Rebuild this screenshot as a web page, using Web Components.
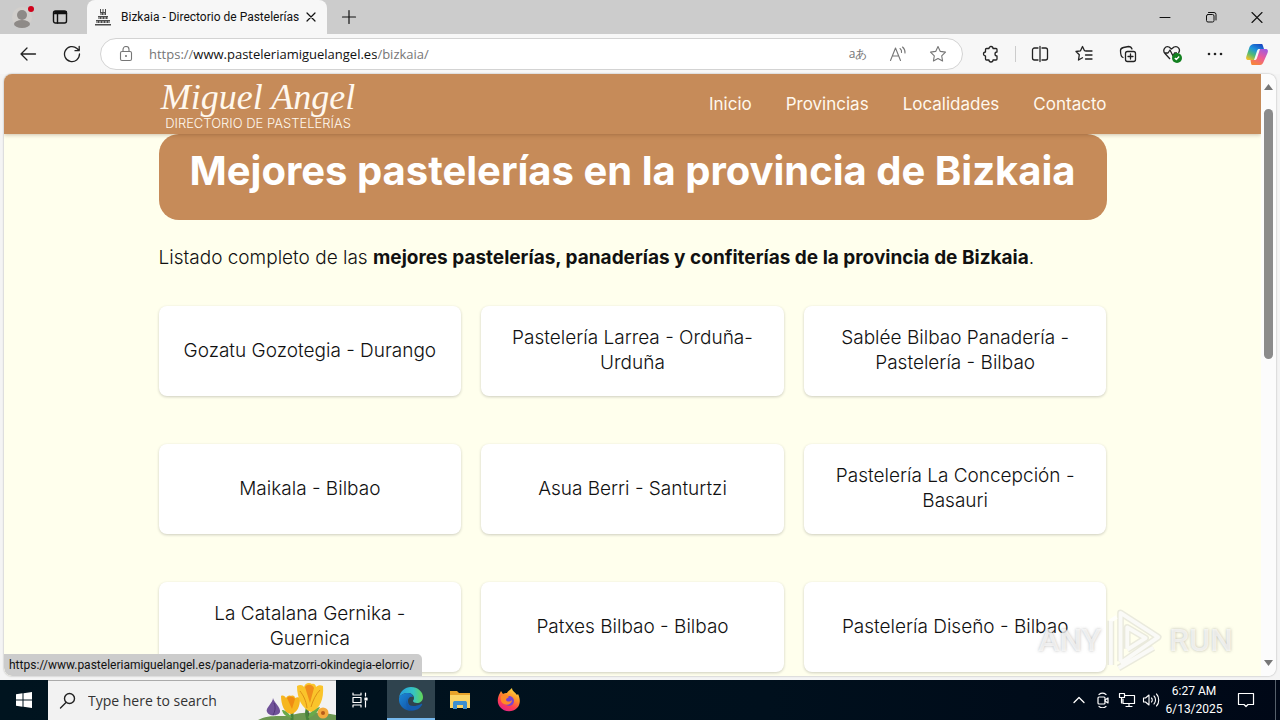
<!DOCTYPE html>
<html lang="es">
<head>
<meta charset="utf-8">
<title>Bizkaia - Directorio de Pastelerías</title>
<style>
  html, body { height: 100%; margin: 0; }
  body { overflow: hidden; font-family: "Open Sans", "Noto Sans", sans-serif; color: #111; }
</style>
</head>
<body>
<desktop-screen></desktop-screen>
<script>
const define = (name, css, html) => {
  const t = document.createElement('template');
  t.innerHTML = `<style>*{box-sizing:border-box}button{font:inherit;color:inherit;background:none;border:0;padding:0;margin:0;display:flex;align-items:center;justify-content:center}a{color:inherit;text-decoration:none}svg{display:block;flex:none}${css}</style>${html}`;
  customElements.define(name, class extends HTMLElement {
    constructor() {
      super();
      this.attachShadow({ mode: 'open' }).append(t.content.cloneNode(true));
    }
  });
};

/* Line icon: <svg> wrapper with a shared stroke style */
const icon = (size, body, w = 1) =>
  `<svg width="${size}" height="${size}" viewBox="0 0 ${size} ${size}" fill="none" stroke="currentColor" stroke-width="${w}" stroke-linecap="round" stroke-linejoin="round" aria-hidden="true">${body}</svg>`;

define('tab-strip', `
  :host{display:flex;height:34px;background:#ccc;align-items:stretch;flex:none;color:#111}
  .left{display:flex;width:87px;align-items:center;padding-left:12px;gap:18px;background:#cbcbcb;border-radius:0 0 8px 0}
  .tab{display:flex;align-items:center;width:240px;background:#f7f7f7;border-radius:8px 8px 0 0;padding:0 8px;font:12px/16px Roboto,sans-serif}
  .tab span{flex:1;white-space:nowrap;margin-left:10px}
  .new{width:44px}
  .win{margin-left:auto;display:flex}
  .win button{width:46px}
`, `
  <div class="left">
    <button aria-label="Profile"><svg width="22" height="24" viewBox="0 0 22 24"><circle cx="10" cy="12" r="10" fill="#d2cfcc"/><circle cx="10" cy="10" r="5" fill="#8e8a87"/><ellipse cx="10" cy="19" rx="8" ry="4" fill="#8e8a87"/><circle cx="19" cy="4" r="3" fill="#d0021b"/></svg></button>
    <button aria-label="Tab actions">${icon(16, '<rect x="1.500" y="2" width="13" height="12" rx="2"/><path d="M2 4.500H14.500M5.500 5V14"/><path d="M3 3H14" stroke-width="2"/>', 1.4)}</button>
  </div>
  <div class="tab">
    <svg width="16" height="17" viewBox="0 0 16 17" fill="#4c4c4c"><path d="M5 3h6v3H5zM3 7h10v3H3zM1 11h14v3H1zM0 15h16v1.500H0z"/><path d="M5 0h1v3H5zM10 0h1v3h-1zM7.500 0h1v3h-1z"/><path d="M5 5h6M3 9h10M1 13h14" stroke="#ddd" stroke-dasharray="2 1"/></svg>
    <span>Bizkaia - Directorio de Pastelerías</span>
    <button aria-label="Close tab">${icon(16, '<path d="M4 4l8 8M12 4l-8 8"/>', 1.2)}</button>
  </div>
  <button class="new" aria-label="New tab">${icon(16, '<path d="M8 1.500v13M1.500 8h13"/>', 1.2)}</button>
  <div class="win">
    <button aria-label="Minimize">${icon(12, '<path d="M1 6.500h10"/>')}</button>
    <button aria-label="Restore">${icon(12, '<rect x="1.500" y="3.500" width="7.500" height="7.500" rx="1.500"/><path d="M3.500 1.500h5.500a2 2 0 0 1 2 2V9"/>')}</button>
    <button aria-label="Close">${icon(12, '<path d="M1 1.500l10 10M11 1.500l-10 10"/>', 1.1)}</button>
  </div>
`);

define('tool-bar', `
  :host{display:flex;height:40px;flex:none;background:#f7f7f7;align-items:center;padding:0 2px 0 6px;color:#222}
  .nav{width:44px;height:32px}
  .url{flex:1;height:32px;margin-left:6px;border:1px solid #d3d3d3;border-radius:16px;background:#fff;display:flex;align-items:center;padding-left:17px;padding-right:4px;font-size:13px;color:#767676}
  .url label{display:flex;flex:1;margin-left:15px;align-items:center;line-height:20px;font-size:13px}
  .url input{border:0;padding:0;margin:0;outline:0;background:none;font:inherit;color:#111;field-sizing:content;height:20px}
  .url button{width:40px}
  .url .lang{font-size:12px}
  .right{display:flex;align-items:center;margin-left:6px}
  .right button{width:44px;height:32px}
  hr{width:1px;height:16px;border:0;background:#ccc;margin:0 2px}
  .right .more{width:42px}
  .right .pilot{width:42px}
`, `
  <button class="nav" aria-label="Back">${icon(18, '<path d="M16.500 9H2M8 3L2 9l6 6"/>', 1.3)}</button>
  <button class="nav" aria-label="Refresh">${icon(18, '<path d="M16.500 9a7.500 7.500 0 1 1-2.500-5.500L16 5.500M16.200 1.500v4.200h-4.200"/>', 1.3)}</button>
  <div class="url">
    ${icon(16, '<rect x="2.500" y="5.500" width="11" height="9" rx="1.500"/><path d="M5 5.500V3.500a3 3 0 0 1 6 0v2"/><circle cx="8" cy="10" r=".5"/>', 1.1)}
    <label><span>https://</span><input aria-label="Address" value="www.pasteleriamiguelangel.es"><span>/bizkaia/</span></label>
    <button class="lang" aria-label="Translate">aあ</button>
    <button aria-label="Read aloud">${icon(18, '<path d="M1.500 15.500L6.500 3l5 12.500M3.200 11h6.600M11 3.500a4 4 0 0 1 1.500 4M13.500 2a7 7 0 0 1 2.500 6"/>', 1.1)}</button>
    <button aria-label="Favorite">${icon(18, '<path d="M9 1.500l2.300 4.900 5.200.7-3.800 3.700.9 5.200L9 13.500 4.400 16l.9-5.200L1.500 7.100l5.200-.7z"/>', 1.1)}</button>
  </div>
  <div class="right">
    <button aria-label="Extensions">${icon(18, '<path d="M4.500 3.500H7a2 2 0 0 1 4 0h3a1 1 0 0 1 1 1V7a2 2 0 0 0 0 4v3a1 1 0 0 1-1 1h-3a2 2 0 0 1-4 0H4.500a1 1 0 0 1-1-1v-3a2 2 0 0 1 0-4V4.500a1 1 0 0 1 1-1z"/>', 1.3)}</button>
    <hr>
    <button aria-label="Split screen">${icon(18, '<path d="M7 3H3.500a2 2 0 0 0-2 2v8a2 2 0 0 0 2 2H7M11 3h3.500a2 2 0 0 1 2 2v8a2 2 0 0 1-2 2H11M9 1.500v15"/>', 1.3)}</button>
    <button aria-label="Favorites">${icon(18, '<path d="M11 6L9.500 5.700 7.500 1.500 5.500 5.800 1 6.500l3.300 3.200L3.500 15l4-2.300M11.500 6H17M10.500 10H17M10.500 14H17"/>', 1.3)}</button>
    <button aria-label="Collections">${icon(18, '<rect x="6.500" y="6.500" width="10" height="10" rx="2"/><path d="M11.500 9v5M9 11.500h5M4 12.500C2.500 12 1.500 9 1.500 5.500c0-2 1-2.500 3-3l5-1c2 0 3 1 3.500 2.500"/>', 1.3)}</button>
    <button aria-label="Browser essentials"><svg width="20" height="20" viewBox="0 0 20 20" fill="none" stroke="#222" stroke-width="1.300" stroke-linejoin="round"><path d="M8 15L3 9.500C0 6 3.500 1.500 7 3l2.500 2L12 3c4-1.500 7 2.500 4.500 6M3 9h3l2-3 3 6 1.500-3H15"/><circle cx="15" cy="14" r="5" fill="#138020" stroke="none"/><path d="M12.800 14l1.500 1.500 2.900-3" stroke="#fff"/></svg></button>
    <button class="more" aria-label="Settings and more"><svg width="16" height="4" viewBox="0 0 16 4" fill="#222"><circle cx="2" cy="2" r="1.300"/><circle cx="8" cy="2" r="1.300"/><circle cx="14" cy="2" r="1.300"/></svg></button>
    <button class="pilot" aria-label="Copilot"><svg width="22" height="21" viewBox="0 0 22 21"><defs><linearGradient id="a" x1=".8" x2=".2" y2="1"><stop stop-color="#1748c4"/><stop offset=".4" stop-color="#1d95dc"/><stop offset=".7" stop-color="#54bb72"/><stop offset="1" stop-color="#eec02b"/></linearGradient><linearGradient id="b" x1=".8" x2=".3" y2="1"><stop stop-color="#a05be0"/><stop offset=".5" stop-color="#ed5b98"/><stop offset="1" stop-color="#f7853a"/></linearGradient></defs><path d="M16 0H8C6 0 4 1.500 3.500 3L.5 12c-1 3 0 4 2 4h5.500l3-9c.5-1.500 1-2 2.500-2h4.500L17 2c-.3-1-.5-2-1-2z" fill="url(#a)"/><path d="M6 21h8c2 0 3-1.500 3.500-3L21.500 9c1-3 0-4-2-4h-5.500l-3 9c-.5 1.500-1 2-2.500 2H4.500l.5 3c.2 1 .5 2 1 2z" fill="url(#b)"/></svg></button>
  </div>
`);

define('site-header', `
  :host{display:block;background:#c68b59;color:#fff8ee;box-shadow:0 1px 4px rgba(90,50,20,.3);position:relative;font-family:Inter,sans-serif}
  header{max-width:948px;height:60px;margin:0 auto;display:flex;align-items:center;justify-content:space-between}
  .logo{display:flex;flex-direction:column;align-items:center;width:199px}
  .name{font:italic 36px/38px "Liberation Serif",serif;white-space:nowrap}
  .sub{font:300 13px/14px Inter,sans-serif;white-space:nowrap}
  nav{display:flex;gap:34px;font-size:17px;line-height:24px}
`, `
  <header>
    <a class="logo" href="#inicio"><span class="name">Miguel Angel</span><span class="sub">DIRECTORIO DE PASTELERÍAS</span></a>
    <nav><a href="#inicio">Inicio</a><a href="#provincias">Provincias</a><a href="#localidades">Localidades</a><a href="#contacto">Contacto</a></nav>
  </header>
`);

define('shop-card', `
  :host{display:flex}
  a{flex:1;min-height:90px;display:flex;align-items:center;justify-content:center;text-align:center;background:#fff;border-radius:8px;box-shadow:0 1px 3px rgba(0,0,0,.2);padding:0 16px 2px;font:300 19px/25px Inter,sans-serif;color:#111}
`, `<a href="#pasteleria"><span><slot></slot></span></a>`);

define('scroll-bar', `
  :host{display:flex;flex-direction:column;align-items:center;justify-content:space-between;width:15px;flex:none;background:#fcfcfc;padding:10px 0}
  .thumb{width:9px;flex:0 0 43%;border-radius:5px;background:#8b8b8b;margin-top:19px}
  .down{margin-top:auto}
`, `
  <svg width="9" height="6" viewBox="0 0 9 6" fill="#777"><path d="M0 6L4.500 0 9 6z"/></svg>
  <div class="thumb"></div>
  <svg class="down" width="9" height="6" viewBox="0 0 9 6" fill="#777"><path d="M0 0h9L4.500 6z"/></svg>
`);

define('shop-page', `
  :host{display:block;flex:1;min-width:0;overflow:hidden;background:#ffffed;font-family:Inter,sans-serif}
  main{max-width:948px;margin:0 auto}
  h1{margin:0;padding:8px 0 20px;text-align:center;color:#fff;background:#c68b59;border-radius:20px;font-size:40px;line-height:58px;font-weight:700;white-space:nowrap}
  p{margin:24px 0 34px;font-size:19px;line-height:28px;font-weight:300;white-space:nowrap}
  b{font-weight:700}
  .grid{display:grid;grid-template-columns:repeat(3,1fr);gap:48px 20px}
`, `
  <site-header></site-header>
  <main>
    <h1>Mejores pastelerías en la provincia de Bizkaia</h1>
    <p>Listado completo de las <b>mejores pastelerías, panaderías y confiterías de la provincia de Bizkaia</b>.</p>
    <div class="grid">
      <shop-card>Gozatu Gozotegia - Durango</shop-card>
      <shop-card>Pastelería Larrea - Orduña-Urduña</shop-card>
      <shop-card>Sablée Bilbao Panadería - Pastelería - Bilbao</shop-card>
      <shop-card>Maikala - Bilbao</shop-card>
      <shop-card>Asua Berri - Santurtzi</shop-card>
      <shop-card>Pastelería La Concepción - Basauri</shop-card>
      <shop-card>La Catalana Gernika - Guernica</shop-card>
      <shop-card>Patxes Bilbao - Bilbao</shop-card>
      <shop-card>Pastelería Diseño - Bilbao</shop-card>
    </div>
  </main>
`);

define('water-mark', `
  :host{position:absolute;right:43px;bottom:4px;display:flex;align-items:center;gap:6px;font:500 32px/64px Roboto,sans-serif;color:rgba(255,255,255,.7);text-shadow:0 0 3px rgba(120,120,120,.5);pointer-events:none}
`, `
  <span>ANY</span>
  <svg width="56" height="64" viewBox="0 0 58 64" fill="none" stroke-linejoin="round"><g stroke="#bbb" stroke-opacity=".3" stroke-width="7"><path d="M14 54V4L53 29 14 56M4 58V12M21 41V19l19 11-19 12M12 61l36-21"/></g><g stroke="#fff" stroke-opacity=".75" stroke-width="4"><path d="M14 54V4L53 29 14 56M4 58V12l6-4M21 41V19l19 11-19 12M12 61l36-21"/></g></svg>
  <span>RUN</span>
`);

define('browser-view', `
  :host{display:flex;flex:1;min-height:0;background:#f4f4f4;padding:0 4px 4px}
  .frame{position:relative;display:flex;flex:1;min-width:0;overflow:hidden;border-radius:8px;box-shadow:0 0 2px rgba(0,0,0,.35)}
  .status{position:absolute;left:0;bottom:0;height:22px;padding:0 8px 0 5px;background:#ccc;border-radius:0 5px 0 8px;font:12px/22px Roboto,sans-serif;white-space:nowrap;color:#111}
`, `
  <div class="frame">
    <shop-page></shop-page>
    <scroll-bar></scroll-bar>
    <water-mark></water-mark>
    <div class="status">https://www.pasteleriamiguelangel.es/panaderia-matzorri-okindegia-elorrio/</div>
  </div>
`);

define('task-bar', `
  :host{display:flex;height:40px;flex:none;background:linear-gradient(90deg,#00141f,#00101d 60%,#000817);color:#fff;align-items:stretch}
  .start,.view{width:48px}
  .app{width:49px}
  .search{display:flex;align-items:center;width:288px;background:#f2f2f2;border-top:1px solid #aaa;padding-left:11px;overflow:hidden;color:#222}
  .search input{flex:1;min-width:0;border:0;outline:0;background:none;margin:0;padding:0 0 0 11px;font:14px/20px "Open Sans",sans-serif;color:#333}
  .search input::placeholder{color:#333;opacity:1}
  .active{background:#2f434e;border-bottom:2px solid #76b9ed;width:48px;margin-left:3px}
  .tray{margin-left:auto;display:flex;align-items:center}
  .tray button{width:24px;height:40px}
  .tray .clock{width:62px;font:12px/18px Roboto,sans-serif;flex-direction:column}
  .tray .note{width:42px;margin-right:8px}
  .edge{width:5px;height:40px;border-left:1px solid #56606b}
`, `
  <button class="start" aria-label="Start"><svg width="16" height="16" viewBox="0 0 16 16" fill="#fff"><path d="M0 2.200L6.500 1.300V7.500H0zM7.500 1.200L16 0V7.500H7.500zM0 8.500H6.500V14.700L0 13.800zM7.500 8.500H16V16L7.500 14.800z"/></svg></button>
  <label class="search">
    ${icon(18, '<circle cx="10.500" cy="6.500" r="5"/><path d="M7 10.500L1.500 16"/>', 1.4)}
    <input type="search" aria-label="Search" placeholder="Type here to search">
    <svg width="78" height="39" viewBox="0 0 78 39"><path d="M0 39c8-5 20-4 30-4 14-5 34-4 48-1v5z" fill="#6d9852"/><path d="M34 39V24M50 39c-2-6-2-10 1-18" stroke="#46833c" stroke-width="3"/><path d="M50 37c3-7 6-10 12-11-2 5-6 9-12 11zM34 37c-4-6-7-8-10-8 1 5 5 7 10 8z" fill="#69aa4a"/><path d="M15 17c1 5 8 9 7 14-1 4-11 5-13 0-2-4 6-9 6-14z" fill="#705299"/><path d="M16 22c2 4 1 9-1 12" stroke="#4f3477" fill="none"/><path d="M23 15c2-1 4 0 5 2 1-2 3-3 5-2 2-1 4 0 4 2 2-1 4-1 5 0 0 9-3 15-9 16-7-1-10-10-10-18z" fill="#f6b61f"/><path d="M29 17c2-2 6-2 8 1l-3 10z" fill="#ef8c13"/><path d="M39 5c3-2 6-1 7 1 1-4 5-5 8-3 2-1 4 1 4 3 2-2 5-2 7-1 1 13-3 23-12 26-9-3-14-14-14-26z" fill="#fac42b"/><path d="M47 6c2-3 7-3 9 1l-4 15z" fill="#f08d1b"/><path d="M42 10c3 4 6 9 7 17M62 9c-4 4-7 10-9 17" stroke="#dd8f15" fill="none"/><circle cx="65" cy="32" r="5.500" fill="#f4ab3d"/><circle cx="65" cy="32" r="2" fill="#b65c1b"/></svg>
  </label>
  <button class="view" aria-label="Task view">${icon(18, '<path d="M2 2v2h8V2M2 16v-2h8v2M2 6.500h8v5H2zM14.500 2v3M14.500 10v6"/><path d="M14 7h2v2h-2z" fill="#fff"/>', 1.2)}</button>
  <button class="active" aria-label="Microsoft Edge"><svg width="24" height="24" viewBox="0 0 24 24"><defs><linearGradient id="e" x2="1"><stop stop-color="#249de0"/><stop offset=".6" stop-color="#35c4c4"/><stop offset="1" stop-color="#62d554"/></linearGradient><linearGradient id="f" x2="1" y2="1"><stop stop-color="#1b88d8"/><stop offset="1" stop-color="#114a9a"/></linearGradient></defs><path d="M0 11C1 4 6 0 12 0c7 0 12 5 12 10 0 4-3 6-6 6-2 0-4-1-4-2s1-1 1-3c0-3-3-5-6-5-4 0-8 2-9 5z" fill="url(#e)"/><path d="M0 11c1-3 5-5 9-5 3 0 5 2 5 4-3-1-5 1-5 4 0 4 4 8 8 9-9 3-18-3-17-12z" fill="url(#f)"/><path d="M9 11c-3 6 3 11 13 6 1-.5 1.500 0 1 1-3 5-8 6-11 5-5-2-6-8-3-12z" fill="#155cae"/></svg></button>
  <button class="app" aria-label="File Explorer"><svg width="22" height="20" viewBox="0 0 22 20"><path d="M1 1h7l2 2h11v5H1z" fill="#e8a32a"/><path d="M1 5h20v13H1z" fill="#fbd466"/><path d="M4 19v-6c0-1.500 1-2 2-2h10c1 0 2 .5 2 2v6h-4v-4H8v4z" fill="#3d8fd1"/></svg></button>
  <button class="app" aria-label="Firefox"><svg width="24" height="24" viewBox="0 0 24 24"><defs><linearGradient id="g" x1=".8" x2=".3" y2="1"><stop stop-color="#ffe342"/><stop offset=".4" stop-color="#ff9029"/><stop offset=".7" stop-color="#ff4050"/><stop offset="1" stop-color="#e52288"/></linearGradient></defs><path d="M3 5l1-2 2 3c1-1 3-1 4-1 1-2 3-3 5-5 0 3 3 4 5 7l1-1c3 6 2 11-1 14-5 5-13 4-17-1-3-4-3-9 0-14z" fill="url(#g)"/><circle cx="12" cy="13" r="5" fill="#7b42cf"/><path d="M4 8c3-2 7-1 8 1-1 1-3 1-3 3 1 2 4 2 6 0 0 4-5 6-8 4-3-1-4-5-3-8z" fill="#ff8a27"/></svg></button>
  <div class="tray">
    <button aria-label="Show hidden icons">${icon(14, '<path d="M2 9.500l5-5 5 5"/>', 1.3)}</button>
    <button aria-label="Meet now">${icon(16, '<rect x="3" y="5" width="7" height="7" rx="1"/><path d="M10 8l3-2v5l-3-2M4 2.500c2-1.500 5-1.500 7 0M4 14.500c2 1.500 5 1.500 7 0"/>', 1.2)}</button>
    <button aria-label="Network">${icon(18, '<path d="M7 4.500h9.500v8H5V8M8 15.500h6M11 13v2M1.500 2.500h5v4h-5zM3.500 7v5"/>', 1.2)}</button>
    <button aria-label="Volume">${icon(18, '<path d="M1.500 7v4h2l3.500 3V4L3.500 7zM9.500 7c1 1 1 3 0 4M12 5c2 2 2 6 0 8M14.500 3c3 3 3 9 0 12"/>', 1.1)}</button>
    <button class="clock" aria-label="Clock"><span>6:27 AM</span><span>6/13/2025</span></button>
    <button class="note" aria-label="Notifications">${icon(18, '<path d="M1.500 2.500h15v11H11L9 15.500 7 13.500H1.500z"/>', 1.2)}</button>
    <div class="edge"></div>
  </div>
`);

define('desktop-screen', `
  :host{display:flex;flex-direction:column;height:100vh}
`, `<tab-strip></tab-strip><tool-bar></tool-bar><browser-view></browser-view><task-bar></task-bar>`);
</script>
</body>
</html>
